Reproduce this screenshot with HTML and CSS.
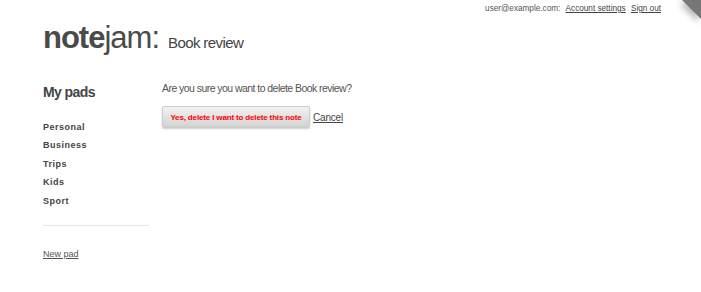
FILE: index.html
```html
<!DOCTYPE html>
<html lang="en">
<head>
    <meta charset="UTF-8">
    <title>Book review</title>
    <link rel="stylesheet" href="styles.css">
</head>
<body>
    <div class="corner"></div>
    <div class="user-bar">
        user@example.com: <a href="#">Account settings</a> <a href="#">Sign out</a>
    </div>
    <div class="container">
        <header class="header">
            <span class="logo">note<span class="logo-light">jam:</span></span>
            <span class="page-title">Book review</span>
        </header>
        <div class="columns">
            <aside class="sidebar">
                <h4>My pads</h4>
                <nav class="pads">
                    <a href="#">Personal</a>
                    <a href="#">Business</a>
                    <a href="#">Trips</a>
                    <a href="#">Kids</a>
                    <a href="#">Sport</a>
                </nav>
                <hr>
                <a href="#" class="new-pad">New pad</a>
            </aside>
            <main class="content">
                <p>Are you sure you want to delete Book review?</p>
                <form class="delete-form">
                    <button type="submit" class="btn-delete">Yes, delete I want to delete this note</button>
                    <a href="#" class="cancel">Cancel</a>
                </form>
            </main>
        </div>
    </div>
</body>
</html>
```

FILE: styles.css
```css
body {
    margin: 0;
    font-family: "Liberation Sans", Arial, sans-serif;
    background-color: #fff;
    color: #555;
}
a {
    color: #444;
}
.corner {
    position: absolute;
    top: 0;
    right: 0;
    width: 0;
    height: 0;
    border-top: 19px solid #777;
    border-left: 19px solid transparent;
    filter: drop-shadow(-3px 3px 3px rgba(0, 0, 0, 0.3));
}
.user-bar {
    text-align: right;
    font-size: 8.2px;
    line-height: 10px;
    padding: 4px 40px 0 0;
    color: #555;
}
.user-bar a {
    margin-left: 3px;
}
.container {
    padding: 0 0 0 43px;
}
.header {
    margin-top: 6px;
    height: 40px;
    display: flex;
    align-items: baseline;
}
.logo {
    font-size: 31px;
    font-weight: bold;
    color: #4a4a4a;
    letter-spacing: -1px;
}
.logo-light {
    font-weight: normal;
}
.page-title {
    font-size: 15px;
    margin-left: 9px;
    color: #444;
    letter-spacing: -0.6px;
}
.columns {
    display: flex;
    margin-top: 23px;
}
.sidebar {
    width: 106px;
}
.sidebar h4 {
    margin: 0;
    font-size: 14px;
    line-height: 18px;
    color: #444;
    letter-spacing: -0.6px;
}
.pads {
    display: flex;
    flex-direction: column;
    gap: 7px;
    margin-top: 21px;
}
.pads a {
    font-size: 9px;
    font-weight: bold;
    text-decoration: none;
    letter-spacing: 0.5px;
    line-height: 11.4px;
}
.sidebar hr {
    border: 0;
    border-top: 1px solid #e6e6e6;
    margin: 18px 0 17px;
}
.new-pad {
    font-size: 9px;
    color: #555;
}
.content {
    margin-left: 13px;
}
.content p {
    margin: 0;
    font-size: 10.5px;
    line-height: 14px;
    margin-top: -2px;
    letter-spacing: -0.55px;
}
.delete-form {
    margin-top: 11px;
    display: flex;
    align-items: center;
}
.btn-delete {
    width: 148px;
    height: 22px;
    font-family: "Liberation Sans", Arial, sans-serif;
    font-size: 8px;
    font-weight: bold;
    letter-spacing: -0.15px;
    white-space: nowrap;
    color: #f00;
    border: 1px solid #ccc;
    border-radius: 2px;
    background: linear-gradient(#f2f2f2, #d2d2d2);
    box-shadow: 0 1px 2px rgba(0, 0, 0, 0.2);
    padding: 0;
    cursor: pointer;
}
.cancel {
    font-size: 10px;
    margin-left: 3px;
    letter-spacing: -0.2px;
}
```
